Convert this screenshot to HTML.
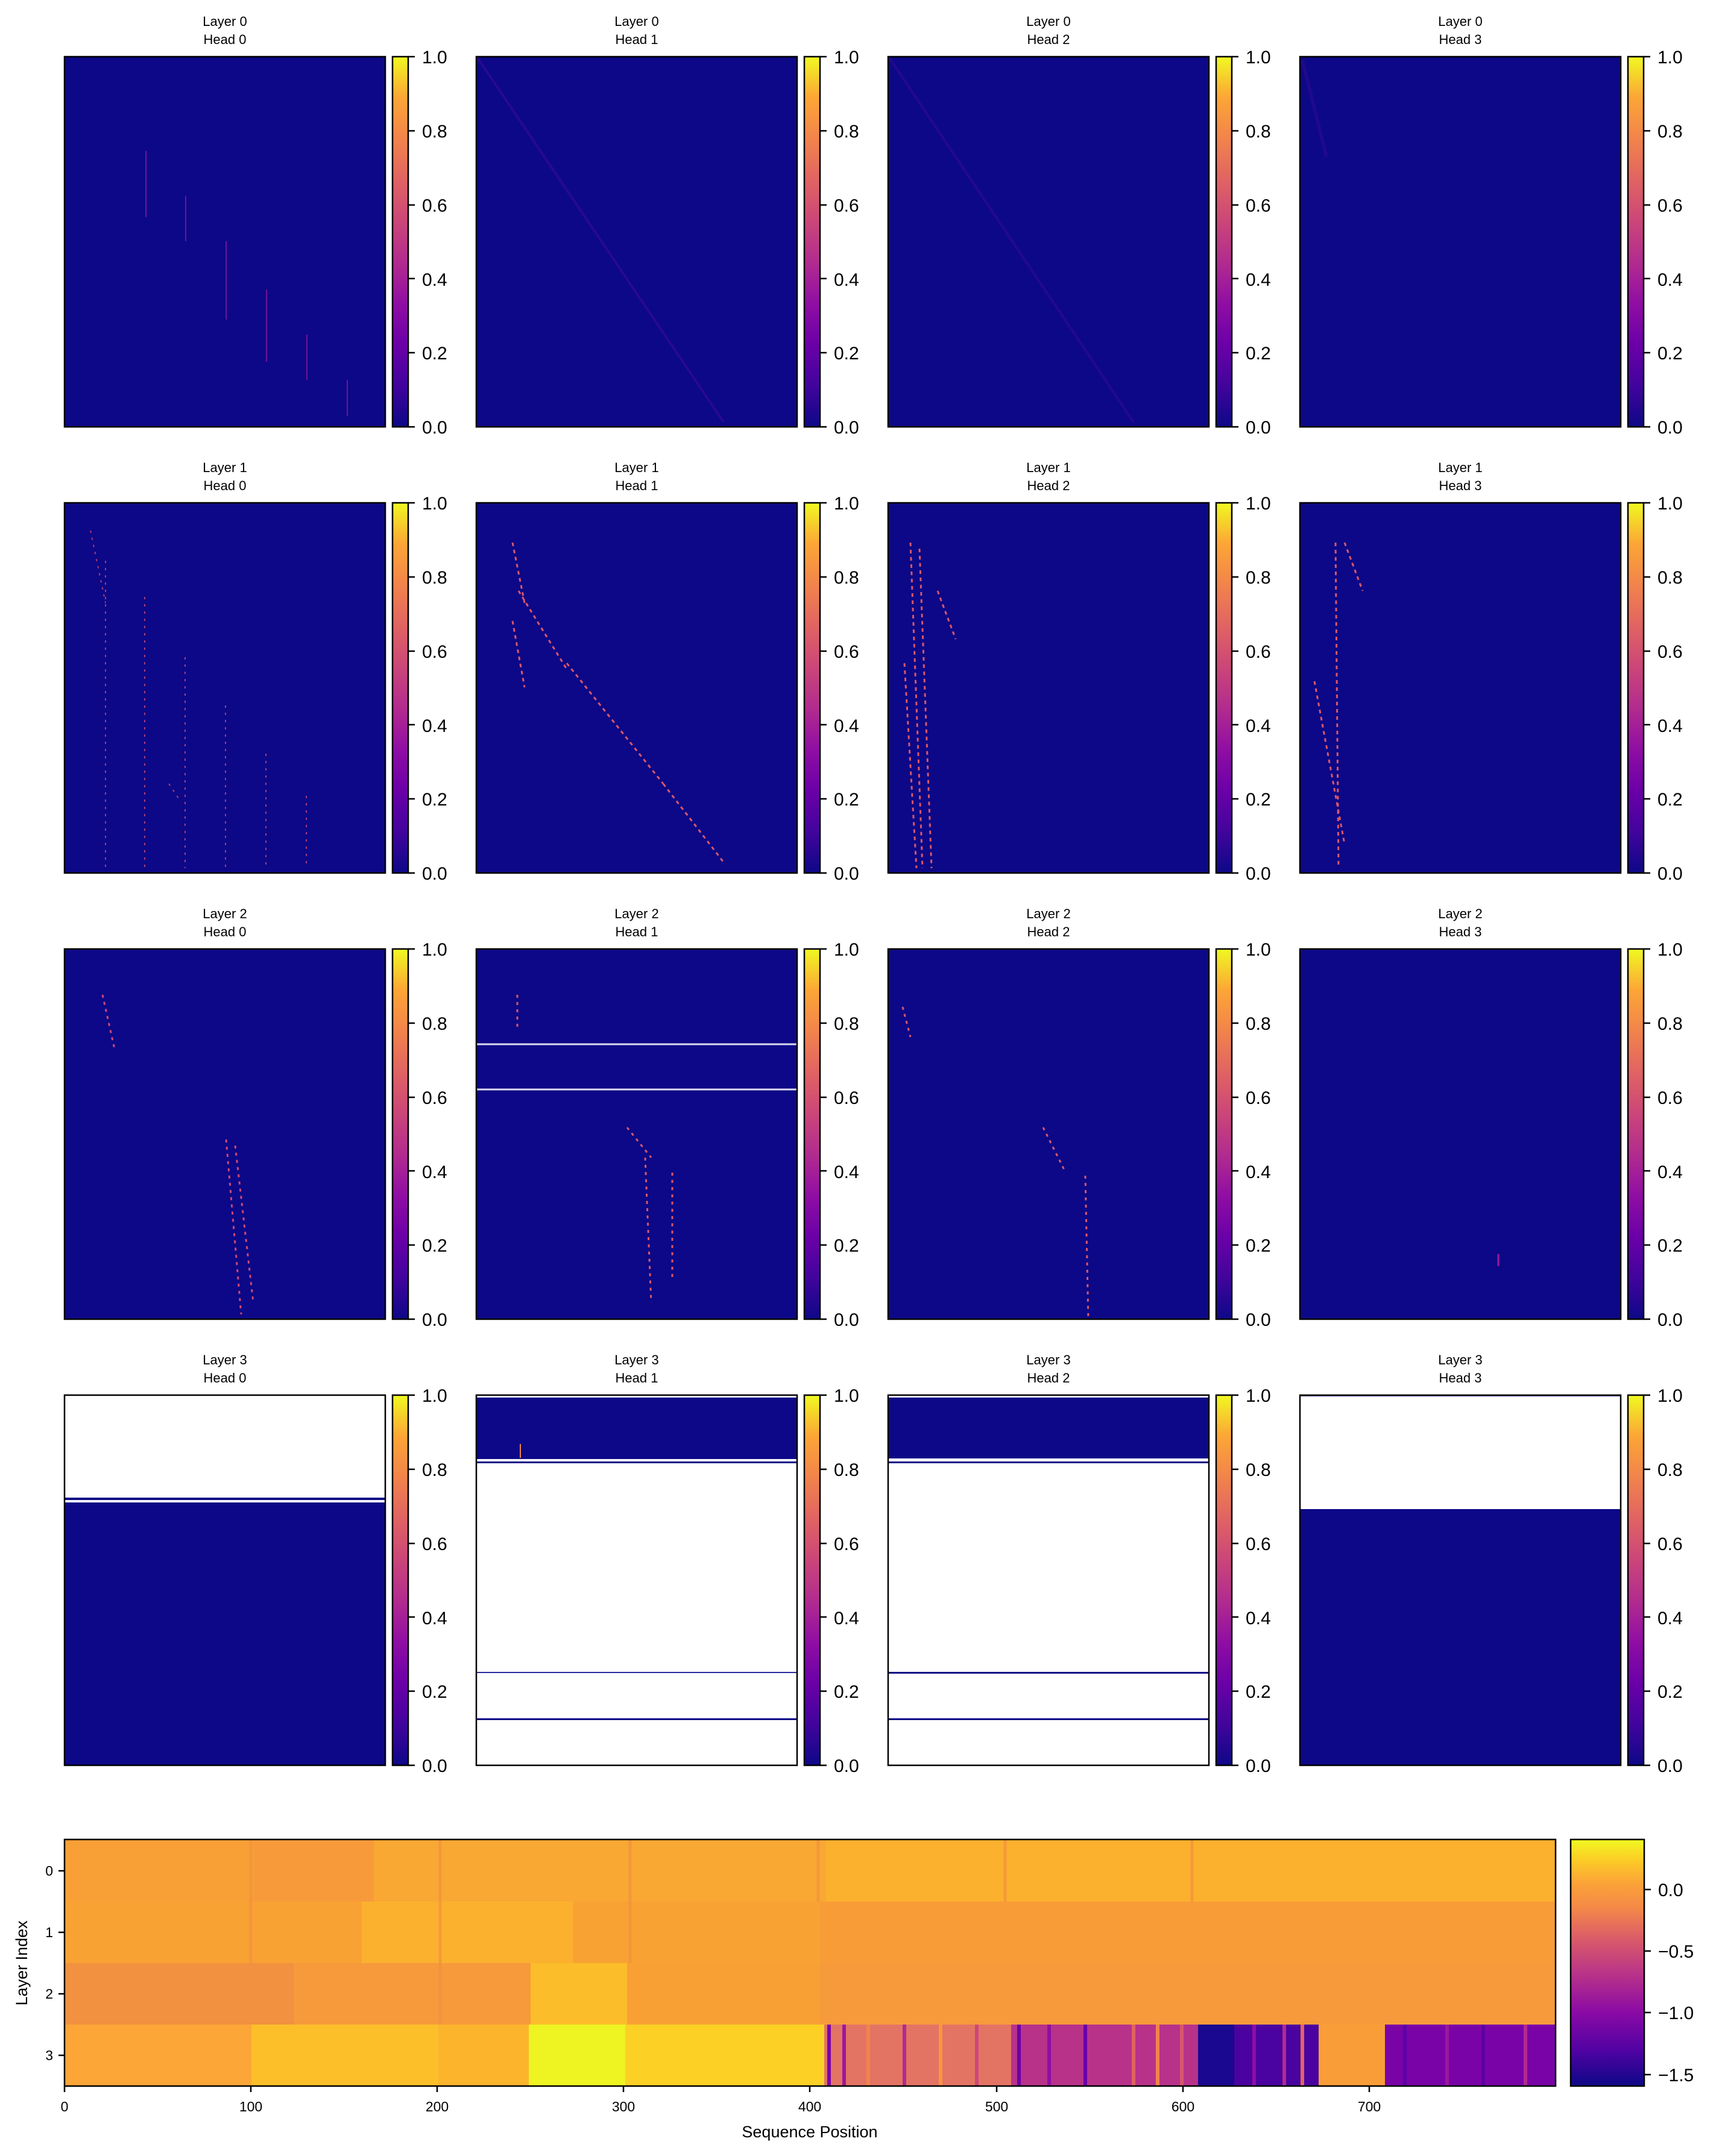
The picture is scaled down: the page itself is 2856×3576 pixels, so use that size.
<!DOCTYPE html>
<html><head><meta charset="utf-8"><style>
html,body{margin:0;padding:0;background:#fff;}
svg{display:block;font-family:"Liberation Sans","DejaVu Sans",sans-serif;}
</style></head><body>
<svg width="2856" height="3576" viewBox="0 0 2856 3576" xmlns="http://www.w3.org/2000/svg">
<defs>
<linearGradient id="pl" x1="0" y1="1" x2="0" y2="0">
<stop offset="0" stop-color="#0d0887"/><stop offset="0.11" stop-color="#41049d"/><stop offset="0.22" stop-color="#6a00a8"/><stop offset="0.33" stop-color="#8f0da4"/><stop offset="0.44" stop-color="#b12a90"/><stop offset="0.56" stop-color="#cc4778"/><stop offset="0.67" stop-color="#e16462"/><stop offset="0.78" stop-color="#f2844b"/><stop offset="0.89" stop-color="#fca636"/><stop offset="1" stop-color="#f0f921"/>
</linearGradient>
<linearGradient id="pl2" x1="0" y1="1" x2="0" y2="0">
<stop offset="0" stop-color="#0d0887"/><stop offset="0.15" stop-color="#5302a3"/><stop offset="0.3" stop-color="#8b0aa5"/><stop offset="0.45" stop-color="#b83289"/><stop offset="0.6" stop-color="#db5c68"/><stop offset="0.72" stop-color="#f48849"/><stop offset="0.82" stop-color="#fba238"/><stop offset="0.92" stop-color="#fcce25"/><stop offset="1" stop-color="#f0f921"/>
</linearGradient>
<g id="cbt" font-size="30" fill="#000">
<text x="0" y="11">1.0</text><text x="0" y="134">0.8</text><text x="0" y="257">0.6</text><text x="0" y="380">0.4</text><text x="0" y="502">0.2</text><text x="0" y="625">0.0</text>
</g>
</defs>
<g id="panels">
<!-- Row 0 -->
<g>
<rect x="107" y="94" width="532" height="614" fill="#0d0887"/>
<g stroke="#9c179e" stroke-width="2" opacity="0.7"><line x1="242" y1="250" x2="242" y2="360"/><line x1="308" y1="325" x2="308" y2="400"/><line x1="375" y1="400" x2="375" y2="530"/><line x1="442" y1="480" x2="442" y2="600"/><line x1="509" y1="555" x2="509" y2="630"/><line x1="576" y1="630" x2="576" y2="690"/></g>
<rect x="790" y="94" width="532" height="614" fill="#0d0887"/>
<line x1="792" y1="96" x2="1200" y2="700" stroke="#3a0a9a" stroke-width="4" opacity="0.6"/>
<rect x="1473" y="94" width="532" height="614" fill="#0d0887"/>
<line x1="1475" y1="96" x2="1880" y2="700" stroke="#3a0a9a" stroke-width="4" opacity="0.5"/>
<rect x="2156" y="94" width="532" height="614" fill="#0d0887"/>
<line x1="2160" y1="100" x2="2200" y2="260" stroke="#2a0a95" stroke-width="6" opacity="0.6"/>
</g>
<!-- Row 1 -->
<g>
<rect x="107" y="834" width="532" height="614" fill="#0d0887"/>
<g stroke="#cc4778" stroke-width="2" stroke-dasharray="4 8" opacity="0.8"><line x1="150" y1="880" x2="175" y2="1000"/><line x1="175" y1="930" x2="175" y2="1440"/><line x1="240" y1="990" x2="240" y2="1440"/><line x1="307" y1="1090" x2="307" y2="1440"/><line x1="374" y1="1170" x2="374" y2="1440"/><line x1="441" y1="1250" x2="441" y2="1440"/><line x1="508" y1="1320" x2="508" y2="1440"/><line x1="280" y1="1300" x2="300" y2="1330"/></g>
<rect x="790" y="834" width="532" height="614" fill="#0d0887"/>
<g stroke="#d8576b" stroke-width="3" stroke-dasharray="6 6"><line x1="850" y1="900" x2="870" y2="1000"/><line x1="860" y1="980" x2="940" y2="1110"/><line x1="940" y1="1100" x2="1100" y2="1300"/><line x1="1100" y1="1300" x2="1200" y2="1430"/><line x1="850" y1="1030" x2="870" y2="1140"/></g>
<rect x="1473" y="834" width="532" height="614" fill="#0d0887"/>
<g stroke="#d8576b" stroke-width="3" stroke-dasharray="6 6"><line x1="1510" y1="900" x2="1530" y2="1440"/><line x1="1525" y1="910" x2="1545" y2="1440"/><line x1="1555" y1="980" x2="1585" y2="1060"/><line x1="1500" y1="1100" x2="1520" y2="1440"/></g>
<rect x="2156" y="834" width="532" height="614" fill="#0d0887"/>
<g stroke="#d8576b" stroke-width="3" stroke-dasharray="6 6"><line x1="2215" y1="900" x2="2220" y2="1440"/><line x1="2180" y1="1130" x2="2230" y2="1400"/><line x1="2230" y1="900" x2="2260" y2="980"/></g>
</g>
<!-- Row 2 -->
<g>
<rect x="107" y="1574" width="532" height="614" fill="#0d0887"/>
<g stroke="#cc4778" stroke-width="3" stroke-dasharray="5 7"><line x1="170" y1="1650" x2="190" y2="1740"/><line x1="375" y1="1890" x2="400" y2="2180"/><line x1="390" y1="1900" x2="420" y2="2160"/></g>
<rect x="790" y="1574" width="532" height="614" fill="#0d0887"/>
<line x1="790" y1="1732" x2="1322" y2="1732" stroke="#fff" stroke-width="3" opacity="0.85"/>
<line x1="790" y1="1807" x2="1322" y2="1807" stroke="#fff" stroke-width="3" opacity="0.85"/>
<g stroke="#d8576b" stroke-width="3" stroke-dasharray="5 7"><line x1="858" y1="1650" x2="858" y2="1710"/><line x1="1040" y1="1870" x2="1080" y2="1920"/><line x1="1070" y1="1920" x2="1080" y2="2160"/><line x1="1115" y1="1945" x2="1115" y2="2120"/></g>
<rect x="1473" y="1574" width="532" height="614" fill="#0d0887"/>
<g stroke="#d8576b" stroke-width="3" stroke-dasharray="5 7"><line x1="1497" y1="1670" x2="1510" y2="1720"/><line x1="1730" y1="1870" x2="1765" y2="1940"/><line x1="1800" y1="1950" x2="1805" y2="2188"/></g>
<rect x="2156" y="1574" width="532" height="614" fill="#0d0887"/>
<line x1="2485" y1="2080" x2="2485" y2="2100" stroke="#9c179e" stroke-width="3"/>
</g>
<!-- Row 3 -->
<g>
<rect x="107" y="2314" width="532" height="614" fill="#0d0887"/>
<rect x="108" y="2315" width="530" height="169" fill="#fff"/>
<rect x="108" y="2488" width="530" height="4" fill="#fff"/>
<rect x="790" y="2314" width="532" height="614" fill="#fff"/>
<rect x="790" y="2318" width="532" height="102" fill="#0d0887"/>
<rect x="790" y="2424" width="532" height="3" fill="#0d0887"/>
<rect x="790" y="2773" width="532" height="2" fill="#2a2aa0"/>
<rect x="790" y="2850" width="532" height="3" fill="#0d0887"/>
<line x1="863" y1="2395" x2="863" y2="2418" stroke="#f2844b" stroke-width="2"/>
<rect x="1473" y="2314" width="532" height="614" fill="#fff"/>
<rect x="1473" y="2318" width="532" height="101" fill="#0d0887"/>
<rect x="1473" y="2424" width="532" height="3" fill="#0d0887"/>
<rect x="1473" y="2773" width="532" height="3" fill="#0d0887"/>
<rect x="1473" y="2850" width="532" height="3" fill="#0d0887"/>
<rect x="2156" y="2314" width="532" height="614" fill="#0d0887"/>
<rect x="2157" y="2316" width="530" height="187" fill="#fff"/>
</g>
</g>
<!-- frames -->
<g fill="none" stroke="#000" stroke-width="2.5">
<rect x="107" y="94" width="532" height="614"/><rect x="790" y="94" width="532" height="614"/><rect x="1473" y="94" width="532" height="614"/><rect x="2156" y="94" width="532" height="614"/>
<rect x="107" y="834" width="532" height="614"/><rect x="790" y="834" width="532" height="614"/><rect x="1473" y="834" width="532" height="614"/><rect x="2156" y="834" width="532" height="614"/>
<rect x="107" y="1574" width="532" height="614"/><rect x="790" y="1574" width="532" height="614"/><rect x="1473" y="1574" width="532" height="614"/><rect x="2156" y="1574" width="532" height="614"/>
<rect x="107" y="2314" width="532" height="614"/><rect x="790" y="2314" width="532" height="614"/><rect x="1473" y="2314" width="532" height="614"/><rect x="2156" y="2314" width="532" height="614"/>
</g>
<!-- colorbars -->
<g id="cbs">
<g id="cb0">
<rect x="651" y="94" width="26" height="614" fill="url(#pl)" stroke="#000" stroke-width="2.5"/>
<g stroke="#000" stroke-width="2.5"><line x1="677" y1="94" x2="688" y2="94"/><line x1="677" y1="217" x2="688" y2="217"/><line x1="677" y1="340" x2="688" y2="340"/><line x1="677" y1="462" x2="688" y2="462"/><line x1="677" y1="585" x2="688" y2="585"/><line x1="677" y1="708" x2="688" y2="708"/></g>
<use href="#cbt" x="700" y="94"/>
</g>
<use href="#cb0" x="683"/><use href="#cb0" x="1366"/><use href="#cb0" x="2049"/>
<use href="#cb0" y="740"/><use href="#cb0" x="683" y="740"/><use href="#cb0" x="1366" y="740"/><use href="#cb0" x="2049" y="740"/>
<use href="#cb0" y="1480"/><use href="#cb0" x="683" y="1480"/><use href="#cb0" x="1366" y="1480"/><use href="#cb0" x="2049" y="1480"/>
<use href="#cb0" y="2220"/><use href="#cb0" x="683" y="2220"/><use href="#cb0" x="1366" y="2220"/><use href="#cb0" x="2049" y="2220"/>
</g>
<!-- titles -->
<g font-size="22" text-anchor="middle" fill="#000">
<text x="373" y="43">Layer 0</text><text x="373" y="73">Head 0</text>
<text x="1056" y="43">Layer 0</text><text x="1056" y="73">Head 1</text>
<text x="1739" y="43">Layer 0</text><text x="1739" y="73">Head 2</text>
<text x="2422" y="43">Layer 0</text><text x="2422" y="73">Head 3</text>
<text x="373" y="783">Layer 1</text><text x="373" y="813">Head 0</text>
<text x="1056" y="783">Layer 1</text><text x="1056" y="813">Head 1</text>
<text x="1739" y="783">Layer 1</text><text x="1739" y="813">Head 2</text>
<text x="2422" y="783">Layer 1</text><text x="2422" y="813">Head 3</text>
<text x="373" y="1523">Layer 2</text><text x="373" y="1553">Head 0</text>
<text x="1056" y="1523">Layer 2</text><text x="1056" y="1553">Head 1</text>
<text x="1739" y="1523">Layer 2</text><text x="1739" y="1553">Head 2</text>
<text x="2422" y="1523">Layer 2</text><text x="2422" y="1553">Head 3</text>
<text x="373" y="2263">Layer 3</text><text x="373" y="2293">Head 0</text>
<text x="1056" y="2263">Layer 3</text><text x="1056" y="2293">Head 1</text>
<text x="1739" y="2263">Layer 3</text><text x="1739" y="2293">Head 2</text>
<text x="2422" y="2263">Layer 3</text><text x="2422" y="2293">Head 3</text>
</g>
<!-- bottom heatmap -->
<g>
<rect x="107" y="3051" width="2473" height="103" fill="#f9a833"/>
<rect x="107" y="3051" width="340" height="103" fill="#f8a036"/>
<rect x="420" y="3051" width="200" height="103" fill="#f79b3a"/>
<rect x="1370" y="3051" width="1210" height="103" fill="#fbb02e"/>
<rect x="107" y="3154" width="2473" height="102" fill="#f9a234"/>
<rect x="600" y="3154" width="350" height="102" fill="#fbb12e"/>
<rect x="1360" y="3154" width="1220" height="102" fill="#f89c38"/>
<rect x="107" y="3256" width="2473" height="102" fill="#f69a3c"/>
<rect x="107" y="3256" width="380" height="102" fill="#f2913f"/>
<rect x="880" y="3256" width="160" height="102" fill="#fcbd2a"/>
<rect x="1040" y="3256" width="320" height="102" fill="#f9a035"/>
<!-- row 3 -->
<rect x="107" y="3358" width="2473" height="102" fill="#f9a035"/>
<rect x="107" y="3358" width="310" height="102" fill="#fba637"/>
<rect x="417" y="3358" width="310" height="102" fill="#fcbf2a"/>
<rect x="727" y="3358" width="150" height="102" fill="#fcb42d"/>
<rect x="877" y="3358" width="160" height="102" fill="#eef322"/>
<rect x="1037" y="3358" width="330" height="102" fill="#fcd025"/>
<rect x="1367" y="3358" width="310" height="102" fill="#e37463"/>
<rect x="1677" y="3358" width="310" height="102" fill="#b8328a"/>
<rect x="1987" y="3358" width="200" height="102" fill="#4a03a0"/>
<rect x="1987" y="3358" width="60" height="102" fill="#1a0890"/>
<rect x="2187" y="3358" width="110" height="102" fill="#f99d39"/>
<rect x="2297" y="3358" width="283" height="102" fill="#7a03a8"/>
<g stroke-width="6">
<line x1="1375" y1="3358" x2="1375" y2="3460" stroke="#7a03a8"/><line x1="1400" y1="3358" x2="1400" y2="3460" stroke="#9c179e"/><line x1="1440" y1="3358" x2="1440" y2="3460" stroke="#f2844b"/><line x1="1500" y1="3358" x2="1500" y2="3460" stroke="#b12a90"/><line x1="1560" y1="3358" x2="1560" y2="3460" stroke="#f89540"/><line x1="1620" y1="3358" x2="1620" y2="3460" stroke="#cc4778"/>
<line x1="1690" y1="3358" x2="1690" y2="3460" stroke="#6a00a8"/><line x1="1740" y1="3358" x2="1740" y2="3460" stroke="#8f0da4"/><line x1="1800" y1="3358" x2="1800" y2="3460" stroke="#6a00a8"/><line x1="1880" y1="3358" x2="1880" y2="3460" stroke="#e16462"/><line x1="1920" y1="3358" x2="1920" y2="3460" stroke="#f2844b"/><line x1="1960" y1="3358" x2="1960" y2="3460" stroke="#d8576b"/>
<line x1="2080" y1="3358" x2="2080" y2="3460" stroke="#8f0da4"/><line x1="2130" y1="3358" x2="2130" y2="3460" stroke="#b12a90"/><line x1="2160" y1="3358" x2="2160" y2="3460" stroke="#e16462"/>
<line x1="2330" y1="3358" x2="2330" y2="3460" stroke="#5c01a6"/><line x1="2400" y1="3358" x2="2400" y2="3460" stroke="#9c179e"/><line x1="2460" y1="3358" x2="2460" y2="3460" stroke="#5c01a6"/><line x1="2530" y1="3358" x2="2530" y2="3460" stroke="#b12a90"/>
</g>
<g stroke="#f2913f" stroke-width="5" opacity="0.7"><line x1="416" y1="3051" x2="416" y2="3358"/><line x1="730" y1="3051" x2="730" y2="3358"/><line x1="1045" y1="3051" x2="1045" y2="3256"/><line x1="1357" y1="3051" x2="1357" y2="3154"/><line x1="1667" y1="3051" x2="1667" y2="3154"/><line x1="1977" y1="3051" x2="1977" y2="3154"/></g>
<rect x="107" y="3051" width="2473" height="409" fill="none" stroke="#000" stroke-width="2.5"/>
</g>
<g stroke="#000" stroke-width="2.5">
<line x1="97" y1="3103" x2="107" y2="3103"/><line x1="97" y1="3205" x2="107" y2="3205"/><line x1="97" y1="3307" x2="107" y2="3307"/><line x1="97" y1="3409" x2="107" y2="3409"/>
<line x1="107" y1="3460" x2="107" y2="3470"/><line x1="416" y1="3460" x2="416" y2="3470"/><line x1="725" y1="3460" x2="725" y2="3470"/><line x1="1034" y1="3460" x2="1034" y2="3470"/><line x1="1343" y1="3460" x2="1343" y2="3470"/><line x1="1653" y1="3460" x2="1653" y2="3470"/><line x1="1962" y1="3460" x2="1962" y2="3470"/><line x1="2271" y1="3460" x2="2271" y2="3470"/>
</g>
<g font-size="23" fill="#000">
<g text-anchor="end"><text x="88" y="3111">0</text><text x="88" y="3213">1</text><text x="88" y="3315">2</text><text x="88" y="3417">3</text></g>
<g text-anchor="middle"><text x="107" y="3502">0</text><text x="416" y="3502">100</text><text x="725" y="3502">200</text><text x="1034" y="3502">300</text><text x="1343" y="3502">400</text><text x="1653" y="3502">500</text><text x="1962" y="3502">600</text><text x="2271" y="3502">700</text></g>
<text x="1343" y="3545" font-size="27" text-anchor="middle">Sequence Position</text>
<text transform="translate(45,3256) rotate(-90)" font-size="27" text-anchor="middle">Layer Index</text>
</g>
<rect x="2605" y="3051" width="122" height="409" fill="url(#pl2)" stroke="#000" stroke-width="2.5"/>
<g stroke="#000" stroke-width="2.5"><line x1="2727" y1="3134" x2="2738" y2="3134"/><line x1="2727" y1="3236" x2="2738" y2="3236"/><line x1="2727" y1="3338" x2="2738" y2="3338"/><line x1="2727" y1="3441" x2="2738" y2="3441"/></g>
<g font-size="30" fill="#000"><text x="2750" y="3145">0.0</text><text x="2750" y="3247">−0.5</text><text x="2750" y="3349">−1.0</text><text x="2750" y="3452">−1.5</text></g>
</svg>
</body></html>
